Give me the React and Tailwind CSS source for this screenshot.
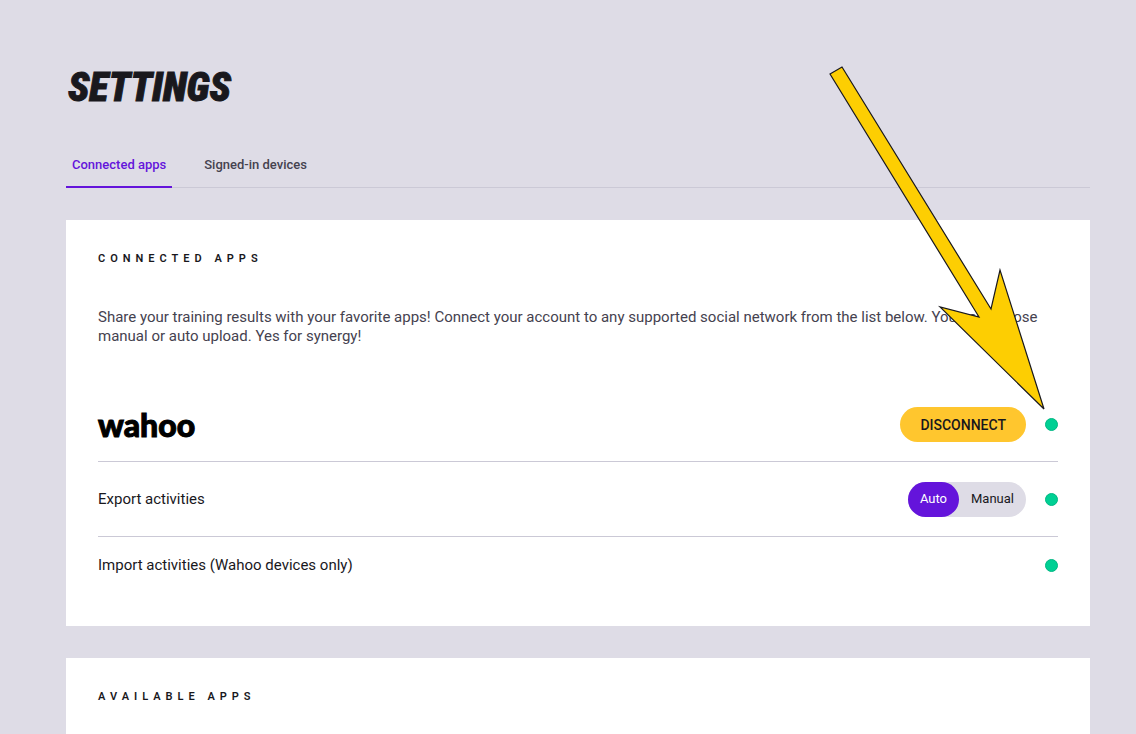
import React, { useState } from "react";

const tabs = ["Connected apps", "Signed-in devices"];
const exportModes = ["Auto", "Manual"];

function StatusDot() {
  return (
    <span
      role="img"
      aria-label="Active"
      className="h-[13px] w-[13px] shrink-0 rounded-full border border-[#00b783] bg-[#00d094]"
    />
  );
}

function Card({ title, children }) {
  return (
    <section className="bg-white p-8">
      <h2 className="text-[11px] leading-[14px] font-semibold tracking-[5px] uppercase text-[#19181d]">
        {title}
      </h2>
      {children}
    </section>
  );
}

function Arrow() {
  return (
    <svg
      aria-hidden="true"
      viewBox="0 0 218 346"
      className="pointer-events-none absolute top-[65px] right-[90px] h-[346px] w-[218px]"
    >
      <polygon
        points="2,9 14,2 163,244 172,205 216,344 112,242 151,252"
        fill="#fdce02"
        stroke="#19181d"
        strokeWidth="1.2"
      />
    </svg>
  );
}

export default function App() {
  const [activeTab, setActiveTab] = useState("Connected apps");
  const [exportMode, setExportMode] = useState("Auto");

  return (
    <div className="relative h-screen overflow-hidden bg-[#dedce6] pt-[60px] pr-[46px] pl-[66px] font-['Roboto',sans-serif] text-[#19181d]">
      <h1 className="pl-0.5 font-['Liberation_Sans_Narrow','Roboto_Condensed',Roboto,sans-serif] text-[40px] leading-[56px] font-black italic uppercase [-webkit-text-stroke:1px_#19181d]">
        Settings
      </h1>

      <div
        role="tablist"
        className="mt-[26px] flex gap-[26px] border-b border-[#cbc9d6]"
      >
        {tabs.map((tab) => (
          <button
            key={tab}
            type="button"
            role="tab"
            aria-selected={activeTab === tab}
            onClick={() => setActiveTab(tab)}
            className={`-mb-px h-[46px] border-b-2 px-1.5 pt-0.5 text-[13px] font-medium ${
              activeTab === tab
                ? "border-[#6414db] text-[#6414db]"
                : "border-transparent text-[#45424f]"
            }`}
          >
            {tab}
          </button>
        ))}
      </div>

      <main className="mt-8 flex flex-col gap-8">
        <Card title="Connected apps">
          <p className="mt-[42px] text-[15px] leading-[19px] text-[#45424f]">
            Share your training results with your favorite apps! Connect your
            account to any supported social network from the list below. You can
            choose manual or auto upload. Yes for synergy!
          </p>

          <div className="mt-[42px]">
            <div className="flex h-[74px] items-center border-b border-[#cbc9d6]">
              <span className="flex-1 font-['Lato',sans-serif] text-[32px] leading-8 font-black text-black [-webkit-text-stroke:1px_black]">
                wahoo
              </span>
              <button
                type="button"
                className="mr-[19px] h-[35px] rounded-full bg-[#ffc62e] px-5 text-sm font-medium uppercase"
              >
                Disconnect
              </button>
              <StatusDot />
            </div>

            <div className="flex h-[75px] items-center border-b border-[#cbc9d6]">
              <span className="flex-1 text-[15px]">Export activities</span>
              <div
                role="radiogroup"
                aria-label="Export activities"
                className="mr-[19px] flex h-[35px] rounded-full bg-[#dedce6]"
              >
                {exportModes.map((mode) => (
                  <label
                    key={mode}
                    className={`relative flex cursor-pointer items-center rounded-full px-3 text-[13px] ${
                      exportMode === mode ? "bg-[#6414db] text-white" : ""
                    }`}
                  >
                    <input
                      type="radio"
                      name="export-mode"
                      value={mode}
                      checked={exportMode === mode}
                      onChange={() => setExportMode(mode)}
                      className="absolute inset-0 cursor-pointer appearance-none rounded-full"
                    />
                    {mode}
                  </label>
                ))}
              </div>
              <StatusDot />
            </div>

            <div className="flex h-[57px] items-center">
              <span className="flex-1 text-[15px]">
                Import activities (Wahoo devices only)
              </span>
              <StatusDot />
            </div>
          </div>
        </Card>

        <Card title="Available apps">
          <div className="h-24" />
        </Card>
      </main>

      <Arrow />
    </div>
  );
}
